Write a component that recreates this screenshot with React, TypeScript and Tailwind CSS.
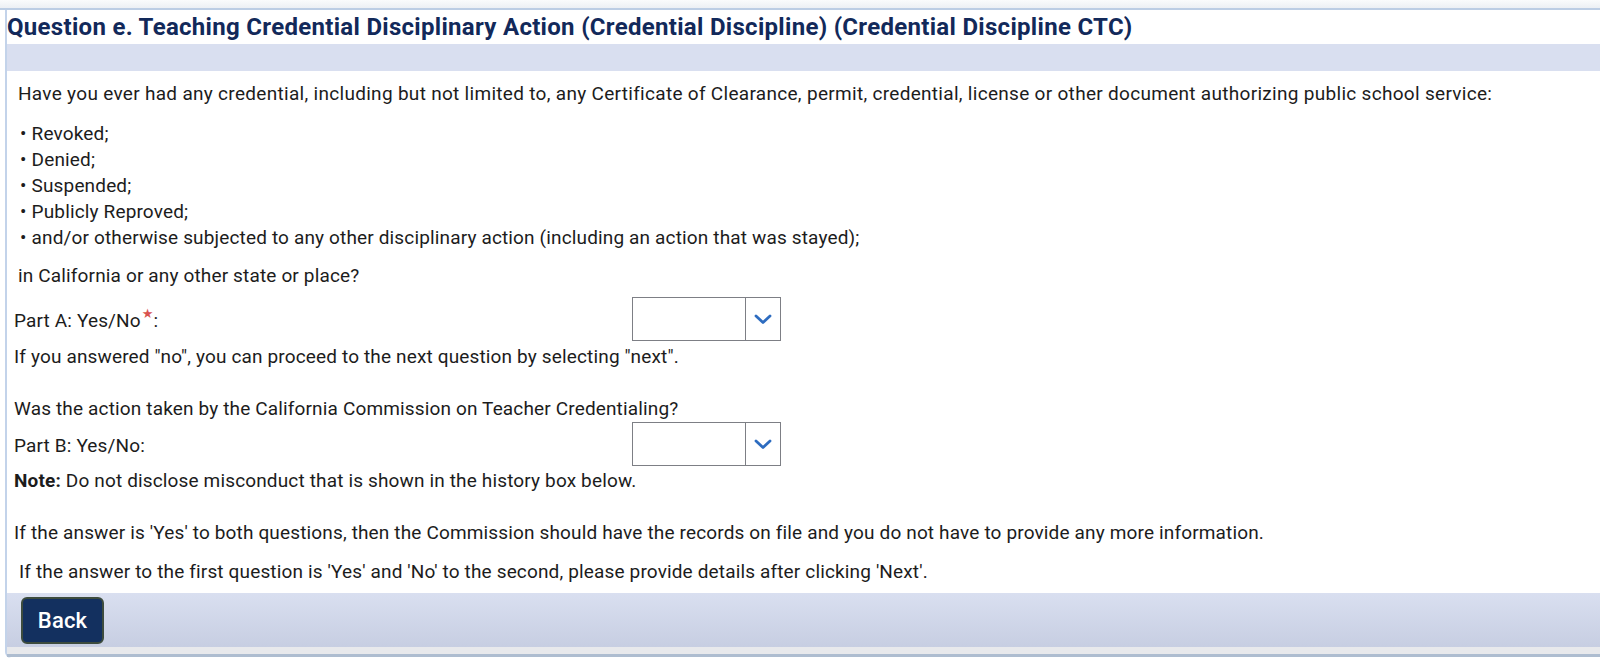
const bullets = [
  "Revoked;",
  "Denied;",
  "Suspended;",
  "Publicly Reproved;",
  "and/or otherwise subjected to any other disciplinary action (including an action that was stayed);",
];

const YesNoSelect = () => (
  <div className="flex h-[44px] w-[149px] border border-[#7d7f85] bg-white">
    <div className="flex-1" />
    <div className="flex w-[35px] items-center justify-center border-l border-[#7d7f85]">
      <svg width="18" height="11" viewBox="0 0 18 11" fill="none">
        <polyline points="2,2 9,8.5 16,2" stroke="#2d6cc0" strokeWidth="2.8" strokeLinecap="round" strokeLinejoin="round" />
      </svg>
    </div>
  </div>
);

export default function App() {
  return (
    <div className="h-[658px] w-full overflow-hidden bg-white font-['Roboto',sans-serif] text-[19px] tracking-[0.15px] text-[#1c1c1c]">
      {/* top strip */}
      <div className="h-[8px] bg-gradient-to-b from-[#fafbfc] to-[#eceff4]" />
      <div className="h-[2px] bg-[#bccde4]" />

      <div className="flex h-[648px] pl-[5px]">
        <div className="flex flex-1 flex-col rounded-bl-[6px] border-l-2 border-[#c3d3ea]">
          <div className="flex h-[34px] items-center text-[24px] font-bold tracking-[0.3px] text-[#12295a]">
            Question e. Teaching Credential Disciplinary Action (Credential Discipline) (Credential Discipline CTC)
          </div>
          <div className="h-[27px] bg-[#d9dff0]" />

          <div className="flex flex-col pl-[7px] pt-[11px]">
            <p className="pl-[4px] leading-[24px] tracking-[0.3px]">
              Have you ever had any credential, including but not limited to, any Certificate of Clearance, permit, credential, license or other document authorizing public school service:
            </p>
            <ul className="mt-[15px] pl-[6px]">
              {bullets.map((b) => (
                <li key={b} className="leading-[26px]">
                  <span className="mr-[5px]">•</span>
                  {b}
                </li>
              ))}
            </ul>
            <p className="mt-[12px] pl-[4px] leading-[26px]">in California or any other state or place?</p>

            <div className="mt-[8px] flex items-center">
              <div className="w-[618px] pt-[5px]">
                Part A: Yes/No
                <span className="relative -top-[9px] ml-[1px] font-['DejaVu_Sans',sans-serif] text-[13px] tracking-normal text-[#d9534f]">★</span>:
              </div>
              <YesNoSelect />
            </div>
            <p className="mt-[4px] leading-[24px]">If you answered "no", you can proceed to the next question by selecting "next".</p>

            <p className="mt-[28px] leading-[24px]">Was the action taken by the California Commission on Teacher Credentialing?</p>
            <div className="mt-[1px] flex items-center">
              <div className="w-[618px] pt-[5px]">Part B: Yes/No:</div>
              <YesNoSelect />
            </div>
            <p className="mt-[3px] leading-[24px]">
              <b>Note:</b> Do not disclose misconduct that is shown in the history box below.
            </p>

            <p className="mt-[28px] leading-[24px]">
              If the answer is 'Yes' to both questions, then the Commission should have the records on file and you do not have to provide any more information.
            </p>
            <p className="mt-[15px] pl-[5px] leading-[24px]">
              If the answer to the first question is 'Yes' and 'No' to the second, please provide details after clicking 'Next'.
            </p>
          </div>

          <div className="mt-[9px] flex h-[54px] items-center bg-gradient-to-b from-[#d9dff0] to-[#c7cee2] pl-[14px]">
            <button className="h-[47px] w-[83px] rounded-[6px] border-2 border-[#3d4c3e] bg-[#13305f] text-[22px] font-medium text-white">
              Back
            </button>
          </div>
          <div className="h-[7px] bg-[#e8e9ec]" />
          <div className="h-[3px] bg-[#aebdd0]" />
        </div>
      </div>
    </div>
  );
}
